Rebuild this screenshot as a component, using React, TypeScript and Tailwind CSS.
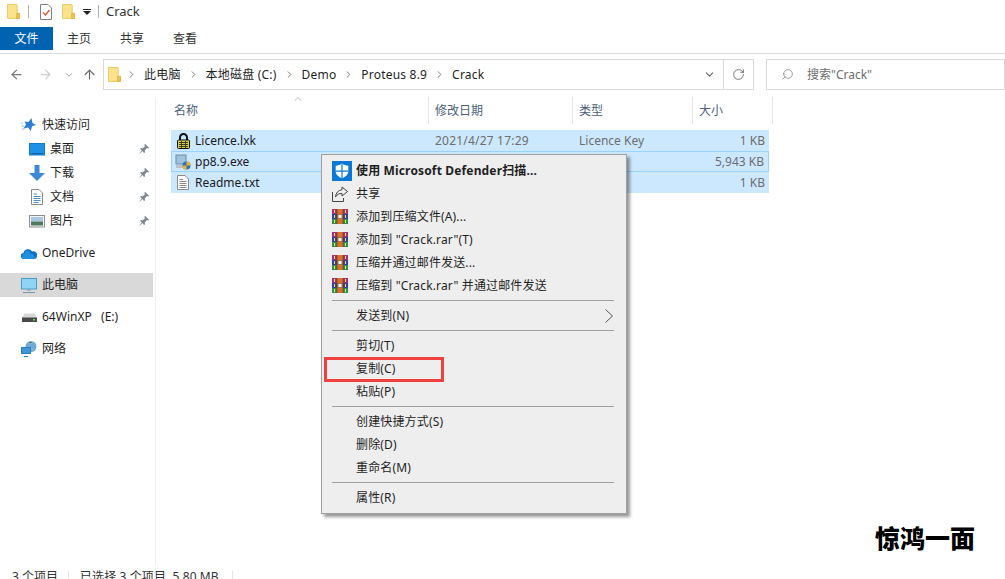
import type { ReactNode } from 'react';
import { ArrowLeft, ArrowRight, ArrowUp, ChevronDown, ChevronRight, ChevronUp, RotateCw, Search } from 'lucide-react';

const FONT = "font-['Noto_Sans','Noto_Sans_CJK_SC',sans-serif]";

const FolderIcon = ({ className = '' }: { className?: string }) => (
  <svg viewBox="0 0 14 16" className={className}>
    <path d="M.5.5h10l.5.5v14.5H.5z" fill="#fbe38e" stroke="#e9c75f" />
    <path d="M10.5 10h3v5.5h-3z" fill="#f0c54e" stroke="#e0b23c" />
  </svg>
);

const PinIcon = () => (
  <svg viewBox="0 0 12 12" className="w-3 h-3">
    <path d="M7 .8 11.200 5 10 5.600 8.800 5 6.700 7.400l.4 1.900-.9.700-4.100-4.200.7-.9 1.900.3L7 3.200 6.400 2z" fill="#7f878e" />
    <path d="M3.500 7.800.8 11.200l3.400-2.700z" fill="#7f878e" />
  </svg>
);

const StarIcon = () => (
  <svg viewBox="0 0 16 16" className="w-4 h-4">
    <path d="M10.500 1 11.500 6 15 8l-4 1.300L9.800 14 7 10.500 2.500 11.500 5 7.500 3.500 4.500 7.500 5z" fill="#2f7fd6" />
    <path d="M0 9h3M1 12h3M0 6h2" stroke="#9cc6ee" strokeWidth="1" />
  </svg>
);

const DesktopIcon = () => (
  <svg viewBox="0 0 16 13" className="w-4 h-[13px]">
    <rect x=".5" y=".5" width="15" height="11.500" fill="#1e90e6" stroke="#0f78c8" />
    <path d="M2 10.500h12" stroke="#0b5fa8" />
  </svg>
);

const DownloadIcon = () => (
  <svg viewBox="0 0 16 16" className="w-4 h-4">
    <path d="M5.500 0h5v8H16l-8 8-8-8h5.500z" fill="#3d8bd8" />
  </svg>
);

const DocIcon = () => (
  <svg viewBox="0 0 12 16" className="w-3 h-4">
    <path d="M.5.5h7.500l3.500 3.500v11.500H.5z" fill="#fff" stroke="#8a8a8a" />
    <path d="M2.500 5H6M2.500 7.500h7M2.500 9.500h7M2.500 11.500h7M2.500 13.500h5" stroke="#4a90c8" />
  </svg>
);

const PictureIcon = () => (
  <svg viewBox="0 0 16 13" className="w-4 h-[13px]">
    <rect x=".5" y=".5" width="15" height="11.500" fill="#f4f4f4" stroke="#8e8e8e" />
    <rect x="2" y="2" width="12" height="4.500" fill="#a9c8e2" />
    <path d="M2 6.500h12V10.500H2z" fill="#4f7a5f" />
  </svg>
);

const CloudIcon = () => (
  <svg viewBox="0 0 16 11" className="w-4 h-[11px]">
    <path d="M3 11a3 3 0 0 1-.4-6A4.500 4.500 0 0 1 11 3.500 3.800 3.800 0 0 1 16 8a3 3 0 0 1-2.500 3z" fill="#0f6cbd" />
    <path d="M3 11a2.500 2.500 0 0 1 .500-5 3 3 0 0 1 6-.5 3 3 0 0 1 3.500 3h1.500A2.200 2.200 0 0 1 13.500 11z" fill="#1f8fe0" />
  </svg>
);

const ComputerIcon = () => (
  <svg viewBox="0 0 16 15" className="w-4 h-[15px]">
    <rect x=".5" y=".5" width="15" height="10.500" fill="#8fd3f5" stroke="#4a9cc8" />
    <path d="M6 12h4M2 14.500h12" stroke="#7a98ad" />
  </svg>
);

const DriveIcon = () => (
  <svg viewBox="0 0 15 9" className="w-[15px] h-[9px]">
    <path d="M2.500.5h10L15 5v4H0V5z" fill="#d8d8d8" />
    <rect x="0" y="4.500" width="15" height="4.500" fill="#4a4a4a" />
    <rect x="11" y="6" width="2" height="1.500" fill="#5de05d" />
  </svg>
);

const NetworkIcon = () => (
  <svg viewBox="0 0 16 16" className="w-4 h-4">
    <circle cx="10" cy="5.500" r="5.500" fill="#6fa9d8" />
    <path d="M7 2c2 1 4 0 5-1M8 6l4 3" stroke="#a8d0a0" />
    <rect x=".5" y="6.500" width="9" height="6" fill="#3f97d8" stroke="#2a7fc0" />
    <path d="M3 15.500h4" stroke="#2a7fc0" />
  </svg>
);

const LockFileIcon = () => (
  <svg viewBox="0 0 13 16" className="w-[13px] h-4">
    <path d="M3 8V4.500a3.500 3.500 0 0 1 7 0V8" fill="none" stroke="#111" strokeWidth="2" />
    <rect x=".5" y="7" width="12" height="8.500" rx="1" fill="#d6d24a" stroke="#111" />
    <path d="M2 9.500h9M2 11.500h9M2 13.500h9M4.500 8v7M8.500 8v7" stroke="#3d3c14" />
  </svg>
);

const ExeIcon = () => (
  <svg viewBox="0 0 16 16" className="w-4 h-4">
    <rect x="1" y="1" width="10" height="9" fill="#9fc3de" stroke="#6d8ea8" />
    <path d="M1 11h9v3H1z" fill="#b9c3cb" />
    <circle cx="11.500" cy="11.500" r="4" fill="#2f6fc0" />
    <path d="M11.500 11.500V7.500a4 4 0 0 1 4 4zM11.500 11.500v4a4 4 0 0 1-4-4z" fill="#f0b429" />
  </svg>
);

const TextFileIcon = () => (
  <svg viewBox="0 0 12 15" className="w-3 h-[15px]">
    <path d="M.5.5h7.500l3.500 3.500v10.500H.5z" fill="#fff" stroke="#8a8a8a" />
    <path d="M2.500 4.500H6M2.500 6.500h7M2.500 8.500h7M2.500 10.500h7M2.500 12.500h7" stroke="#8a8a8a" />
  </svg>
);

const ShieldIcon = () => (
  <svg viewBox="0 0 20 20" className="w-5 h-5">
    <rect width="20" height="20" fill="#0a78d4" />
    <path d="M10 2.600c1.800 1.400 4 2.100 6.300 2.200v5.400c0 3.200-2.700 5.500-6.300 7-3.600-1.500-6.300-3.800-6.300-7V4.800C6 4.700 8.200 4 10 2.600z" fill="#fff" />
    <path d="M9.400 2.800h1.200v14.400H9.400zM3.700 9.500h12.600v1.200H3.700z" fill="#0a78d4" />
  </svg>
);

const ShareIcon = () => (
  <svg viewBox="0 0 16 16" className="w-4 h-4" fill="none" stroke="#444">
    <path d="M.5 6v9.500h11V12" />
    <path d="M10 1l5.500 4.500L10 10V7.500C7 7.300 5 8.500 3.500 11c.3-4 2.500-6.800 6.500-7.300z" />
  </svg>
);

const RarIcon = () => (
  <svg viewBox="0 0 16 15" className="w-4 h-[15px]">
    <rect x="0" y="0" width="16" height="5" fill="#a83270" />
    <rect x="0" y="5" width="16" height="5" fill="#34409f" />
    <rect x="0" y="10" width="16" height="5" fill="#2f9148" />
    <rect x="5" y="0" width="6" height="15" fill="#d9702c" />
    <path d="M5 0v15M11 0v15" stroke="#5a3a2a" strokeWidth=".6" />
    <rect x="6" y="5.500" width="4" height="4" fill="#f6f0dc" stroke="#8a5a2a" strokeWidth=".7" />
    <path d="M2.500 1v3M13.500 1v3M2.500 6v3M13.500 6v3M2.500 11v3M13.500 11v3" stroke="#f5e66a" />
  </svg>
);

const NavRow = ({ icon, label, pinned, active, indent }: { icon: ReactNode; label: string; pinned?: boolean; active?: boolean; indent?: boolean }) => (
  <div className={`flex items-center h-6 mr-[2px] ${active ? 'bg-[#d9d9d9]' : ''} ${indent ? 'pl-[29px]' : 'pl-[21px]'} pr-[3px]`}>
    <span className="w-4 h-4 flex items-center justify-center shrink-0">{icon}</span>
    <span className="ml-[5px] flex-1 whitespace-pre text-[#1f1f1f]">{label}</span>
    {pinned && <PinIcon />}
  </div>
);

const FileRow = ({ icon, name, date, type, size, focused }: { icon: ReactNode; name: string; date: string; type: string; size: string; focused?: boolean }) => (
  <div className={`flex items-center h-[21px] bg-[#cce8ff] ${focused ? 'border border-[#99d1ff]' : ''}`}>
    <span className={`w-4 flex justify-center shrink-0 ${focused ? 'ml-[3px]' : 'ml-1'}`}>{icon}</span>
    <span className="ml-1 w-[240px] shrink-0 text-[#1a1a1a]">{name}</span>
    <span className="w-[144px] shrink-0 text-[#6d6d6d] tracking-[0.2px]">{date}</span>
    <span className="w-[113px] shrink-0 text-[#6d6d6d]">{type}</span>
    <span className="flex-1 text-right pr-[4px] text-[#6d6d6d]">{size}</span>
  </div>
);

const MenuRow = ({ icon, label, bold, arrow }: { icon?: ReactNode; label: string; bold?: boolean; arrow?: boolean }) => (
  <div className={`flex items-center h-[23px] pl-[10px] pr-[13px] text-[#1f1f1f] tracking-[0.15px] ${bold ? 'font-bold' : ''}`}>
    <span className="w-5 flex justify-start shrink-0">{icon}</span>
    <span className="ml-[4px] flex-1 whitespace-pre">{label}</span>
    {arrow && (
      <svg viewBox="0 0 8 14" className="w-2 h-[14px]" fill="none" stroke="#555">
        <path d="M.5.5 7.500 7 .5 13.500" />
      </svg>
    )}
  </div>
);

const MenuSeparator = () => (
  <div className="h-[7px] pt-[3px] pl-[10px] pr-[12px]">
    <div className="h-px bg-[#a0a0a0]" />
  </div>
);

const ContextMenu = () => (
  <div className="absolute left-[321px] top-[154px] w-[306px] h-[360px] bg-[#eeeeee] border border-[#a0a0a0] py-[4px] shadow-[3px_3px_3px_rgba(0,0,0,0.4)]">
    <MenuRow icon={<ShieldIcon />} label="使用 Microsoft Defender扫描..." bold />
    <MenuRow icon={<ShareIcon />} label="共享" />
    <MenuRow icon={<RarIcon />} label="添加到压缩文件(A)..." />
    <MenuRow icon={<RarIcon />} label={'添加到 "Crack.rar"(T)'} />
    <MenuRow icon={<RarIcon />} label="压缩并通过邮件发送..." />
    <MenuRow icon={<RarIcon />} label={'压缩到 "Crack.rar" 并通过邮件发送'} />
    <MenuSeparator />
    <MenuRow label="发送到(N)" arrow />
    <MenuSeparator />
    <MenuRow label="剪切(T)" />
    <MenuRow label="复制(C)" />
    <MenuRow label="粘贴(P)" />
    <MenuSeparator />
    <MenuRow label="创建快捷方式(S)" />
    <MenuRow label="删除(D)" />
    <MenuRow label="重命名(M)" />
    <MenuSeparator />
    <MenuRow label="属性(R)" />
  </div>
);

const Crumb = ({ label }: { label: string }) => (
  <>
    <ChevronRight size={11} strokeWidth={2} className="text-[#777] mx-[7px] shrink-0" />
    <span className="whitespace-pre text-[#1f1f1f] tracking-[0.2px]">{label}</span>
  </>
);

export default function App() {
  return (
    <div className={`${FONT} relative w-[1005px] h-[579px] overflow-hidden bg-white text-[12px] leading-none`}>
      {/* title bar */}
      <div className="flex items-center h-[23px] mb-[4px] pl-[7px]">
        <FolderIcon className="w-[13px] h-[15px]" />
        <div className="ml-[8px] w-px h-[13px] bg-[#b0b0b0]" />
        <svg viewBox="0 0 12 16" className="ml-[11px] w-3 h-4">
          <path d="M.5.500h7.500l3.500 3.500v11.500H.5z" fill="#fff" stroke="#808080" />
          <path d="M3 8.500 5.500 11 9.500 6" fill="none" stroke="#e0532a" strokeWidth="1.300" />
        </svg>
        <FolderIcon className="ml-[10px] w-[13px] h-[15px]" />
        <svg viewBox="0 0 8 6" className="ml-[8px] w-2 h-[6px]">
          <path d="M0 0h8v1H0zM0 2h8L4 6z" fill="#222" />
        </svg>
        <div className="ml-[7px] w-px h-[13px] bg-[#b0b0b0]" />
        <span className="ml-[7px] text-[13px] text-[#333]">Crack</span>
      </div>

      {/* ribbon tabs */}
      <div className="flex h-[26px] border-b border-[#dadada] box-content">
        <div className="w-[53px] h-[23px] bg-[#0063b1] text-white flex items-center justify-center">文件</div>
        <div className="h-[23px] flex items-center pl-[14px] pt-[1px] gap-[29px] text-[#333]">
          <span>主页</span>
          <span>共享</span>
          <span>查看</span>
        </div>
      </div>

      {/* address row */}
      <div className="flex items-center h-[35px] mt-[3px] pl-[9px]">
        <ArrowLeft size={15} strokeWidth={2} className="text-[#7a7a7a] shrink-0" />
        <ArrowRight size={15} strokeWidth={2} className="ml-[14px] text-[#cfcfcf] shrink-0" />
        <ChevronDown size={10} strokeWidth={2} className="ml-[11px] text-[#8a8a8a] shrink-0" />
        <ArrowUp size={15} strokeWidth={2} className="ml-[8px] text-[#6f6f6f] shrink-0" />
        <div className="ml-[6px] flex items-center w-[651px] h-[31px] border border-[#d9d9d9]">
          <FolderIcon className="ml-[4px] -mr-[2px] w-[13px] h-[15px] shrink-0" />
          <Crumb label="此电脑" />
          <Crumb label="本地磁盘 (C:)" />
          <Crumb label="Demo" />
          <Crumb label="Proteus 8.9" />
          <Crumb label="Crack" />
          <div className="ml-auto flex items-center h-full">
            <ChevronDown size={13} strokeWidth={2} className="mr-[7px] text-[#666]" />
            <div className="flex items-center justify-center w-[30px] h-full border-l border-[#d9d9d9]">
              <RotateCw size={13} strokeWidth={1.600} className="text-[#666]" />
            </div>
          </div>
        </div>
        <div className="ml-[12px] flex-1 flex items-center h-[31px] border border-[#d9d9d9]">
          <Search size={13} strokeWidth={1.200} className="ml-[14px] -scale-x-100 text-[#777]" />
          <span className="ml-[13px] text-[#6d6d6d]">搜索"Crack"</span>
        </div>
      </div>

      {/* body */}
      <div className="flex h-[468px] mt-[5px]">
        <div className="w-[156px] shrink-0 border-r border-[#f0f0f0] pt-[16px] h-full">
          <NavRow icon={<StarIcon />} label="快速访问" />
          <NavRow icon={<DesktopIcon />} label="桌面" pinned indent />
          <NavRow icon={<DownloadIcon />} label="下载" pinned indent />
          <NavRow icon={<DocIcon />} label="文档" pinned indent />
          <NavRow icon={<PictureIcon />} label="图片" pinned indent />
          <div className="h-2" />
          <NavRow icon={<CloudIcon />} label="OneDrive" />
          <div className="h-2" />
          <NavRow icon={<ComputerIcon />} label="此电脑" active />
          <div className="h-2" />
          <NavRow icon={<DriveIcon />} label="64WinXP   (E:)" />
          <div className="h-2" />
          <NavRow icon={<NetworkIcon />} label="网络" />
        </div>

        <div className="flex-1 min-w-0 relative">
          <ChevronUp size={12} strokeWidth={1} className="absolute left-[136px] -top-[4px] text-[#777]" />
          <div className="flex h-[27px] items-center text-[#4c607a] ml-[18px]">
            <div className="w-[255px] h-full flex items-center border-r border-[#e5e5e5]">名称</div>
            <div className="w-[144px] pl-[6px] h-full flex items-center border-r border-[#e5e5e5]">修改日期</div>
            <div className="w-[120px] pl-[6px] h-full flex items-center border-r border-[#e5e5e5]">类型</div>
            <div className="w-[80px] pl-[6px] h-full flex items-center border-r border-[#e5e5e5]">大小</div>
          </div>
          <div className="ml-[15px] mt-[6px] w-[598px]">
            <FileRow icon={<LockFileIcon />} name="Licence.lxk" date="2021/4/27 17:29" type="Licence Key" size="1 KB" />
            <FileRow icon={<ExeIcon />} name="pp8.9.exe" date="" type="" size="5,943 KB" focused />
            <FileRow icon={<TextFileIcon />} name="Readme.txt" date="" type="" size="1 KB" />
          </div>
        </div>
      </div>

      {/* status bar */}
      <div className="absolute left-[12px] top-[571px] flex text-[#333] whitespace-pre">
        <span className="w-[57px] border-r border-[#e5e5e5]">3 个项目</span>
        <span className="pl-[11px] w-[164px] border-r border-[#e5e5e5] tracking-[0.1px]">已选择 3 个项目  5.80 MB</span>
      </div>

      <ContextMenu />

      {/* red highlight around the copy item */}
      <div className="absolute left-[324px] top-[357px] w-[120px] h-[25px] border-[3px] border-[#f04040]" />

      {/* watermark */}
      <div className="absolute left-[875px] top-[525px] font-['Noto_Sans_CJK_SC',sans-serif] font-black text-[25px] text-black">惊鸿一面</div>
    </div>
  );
}
